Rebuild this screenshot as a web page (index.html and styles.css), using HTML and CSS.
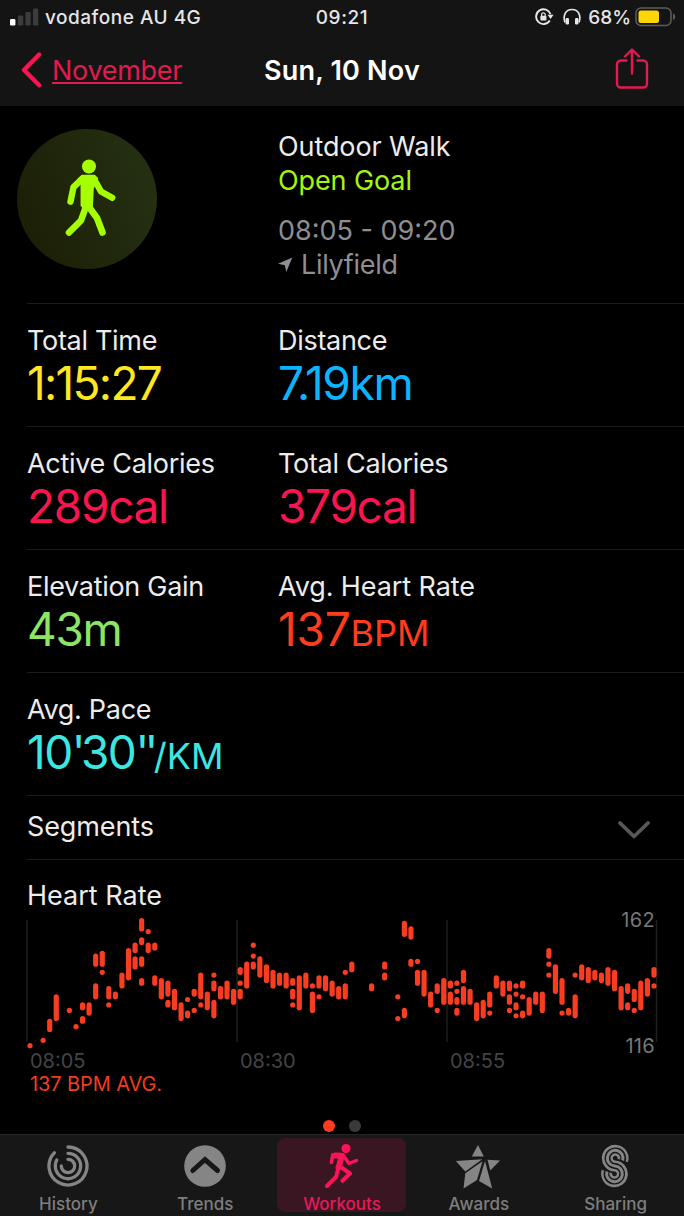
FILE: index.html
```
<!DOCTYPE html>
<html lang="en">
<head>
  <meta charset="UTF-8">
  <meta name="viewport" content="width=device-width, initial-scale=1.0">
  <title>Outdoor Walk - Workouts</title>
  <link rel="stylesheet" href="styles.css">
</head>
<body>

  <header>
    <div class="status-bar">
      <div class="carrier">
        <svg class="signal" width="30" height="18" viewBox="0 0 30 18">
          <rect x="0" y="11" width="5.4" height="6.5" rx="1.2" fill="#fff"/>
          <rect x="8" y="7.5" width="5.2" height="10" rx="1.2" fill="#3c3c3c"/>
          <rect x="15.5" y="4" width="5.2" height="13.5" rx="1.2" fill="#3c3c3c"/>
          <rect x="23" y="0.5" width="5.2" height="17" rx="1.2" fill="#3c3c3c"/>
        </svg>
        <span class="carrier-name">vodafone AU 4G</span>
      </div>
      <span class="clock">09:21</span>
      <div class="indicators">
        <svg class="lock" width="19" height="18" viewBox="0 0 19 18">
          <path d="M15.5 6.2A7.4 7.4 0 1 0 14.8 12.6" fill="none" stroke="#e6e6e6" stroke-width="1.9"/>
          <path d="M12.6 6.8h6l-3 4.2z" fill="#e6e6e6"/>
          <rect x="5.4" y="7.8" width="6" height="4.8" rx="0.6" fill="#e6e6e6"/>
          <path d="M6.6 8V6.6a1.8 1.8 0 0 1 3.6 0V8" fill="none" stroke="#e6e6e6" stroke-width="1.2"/>
        </svg>
        <svg class="headphones" width="18" height="18" viewBox="0 0 18 18">
          <path d="M2 14.5C-0.5 7 3 1.5 9 1.5S18.5 7 16 14.5" fill="none" stroke="#e6e6e6" stroke-width="1.7"/>
          <rect x="2.6" y="10" width="3.4" height="6.5" rx="1.2" fill="#e6e6e6"/>
          <rect x="12" y="10" width="3.4" height="6.5" rx="1.2" fill="#e6e6e6"/>
        </svg>
        <span class="battery-level">68%</span>
        <svg width="41" height="20" viewBox="0 0 41 20">
          <rect x="1" y="1" width="35" height="17.5" rx="5" fill="none" stroke="#5c5c5c" stroke-width="1.5"/>
          <rect x="3.5" y="3.5" width="20.5" height="12.5" rx="2.5" fill="#fdd60a"/>
          <path d="M38 6.5c3 1 3 5.5 0 6.5z" fill="#5c5c5c"/>
        </svg>
      </div>
    </div>
    <nav class="nav-bar">
      <a class="back" href="#">
        <svg width="22" height="36" viewBox="0 0 22 36">
          <path d="M18.2 2.5L3 18l15.2 15.3" fill="none" stroke="#fa1450" stroke-width="4.4" stroke-linecap="round" stroke-linejoin="round"/>
        </svg>
        <span class="back-label">November</span>
      </a>
      <h1>Sun, 10 Nov</h1>
      <svg class="share" width="34" height="42" viewBox="0 0 34 42">
        <path d="M11.5 12.5H6a4 4 0 0 0-4 4v19a4 4 0 0 0 4 4h22a4 4 0 0 0 4-4v-19a4 4 0 0 0-4-4h-5.5M17 25.5V2M10 8.5L17 1.5l7 7" fill="none" stroke="#e11a50" stroke-width="2.4" stroke-linecap="round" stroke-linejoin="round"/>
      </svg>
    </nav>
  </header>

  <main>
    <section class="summary">
      <div class="badge">
        <svg width="46" height="84" viewBox="0 0 46 84" overflow="visible" fill="none" stroke="#a5ff00" stroke-linecap="round" stroke-linejoin="round">
          <circle cx="25" cy="9.5" r="7" fill="#a5ff00" stroke="none"/>
          <path d="M18 18.5h12.5l3 3-4.5 10-0.8 18-4 3.5h-3.2l-3.7-4.5V28l-3-6z" fill="#a5ff00" stroke-width="1.5"/>
          <path d="M18.5 21.7l-9 8.500L6.500 44.700M30 22l7 12.500 11.200 6.300" stroke-width="6.4"/>
          <path d="M22 49.5l-5 14L5 75.5M25 50l8 11 5.5 14.5" stroke-width="6.6"/>
        </svg>
      </div>
      <div class="details">
        <p class="workout">Outdoor Walk</p>
        <p class="goal">Open Goal</p>
        <p class="hours">08:05 - 09:20</p>
        <p class="place">
          <svg width="15" height="16" viewBox="0 0 15 16"><path d="M14.3 0.5L8.3 15 6.8 8.2 0 6.8z" fill="#8e8e93"/></svg>
          <span>Lilyfield</span>
        </p>
      </div>
    </section>

    <section class="stats">
      <div class="stat-row">
        <div class="stat">
          <h2>Total Time</h2>
          <p class="value time">1:15:27</p>
        </div>
        <div class="stat">
          <h2>Distance</h2>
          <p class="value distance">7.19km</p>
        </div>
      </div>
      <div class="stat-row">
        <div class="stat">
          <h2>Active Calories</h2>
          <p class="value calories">289cal</p>
        </div>
        <div class="stat">
          <h2>Total Calories</h2>
          <p class="value calories">379cal</p>
        </div>
      </div>
      <div class="stat-row">
        <div class="stat">
          <h2>Elevation Gain</h2>
          <p class="value elevation">43m</p>
        </div>
        <div class="stat">
          <h2 class="wide">Avg. Heart Rate</h2>
          <p class="value heart">137<span class="unit">BPM</span></p>
        </div>
      </div>
      <div class="stat-row">
        <div class="stat">
          <h2>Avg. Pace</h2>
          <p class="value pace">10<span class="tick">'</span>30<span class="tick">''</span><span class="unit">/KM</span></p>
        </div>
      </div>
    </section>

    <section class="segments">
      <h2>Segments</h2>
      <svg width="34" height="22" viewBox="0 0 34 22">
        <path d="M3 4l14 13.5L31 4" fill="none" stroke="#58585b" stroke-width="3.8" stroke-linecap="round" stroke-linejoin="round"/>
      </svg>
    </section>

    <section class="heart-rate">
      <h2>Heart Rate</h2>
      <div class="chart">
        <svg id="heart-chart" width="632" height="136" viewBox="0 0 632 136"></svg>
        <span class="scale-max">162</span>
        <span class="scale-min">116</span>
      </div>
      <div class="hours-axis">
        <span>08:05</span>
        <span>08:30</span>
        <span>08:55</span>
      </div>
      <p class="average">137 BPM AVG.</p>
      <div class="pager">
        <span class="dot active"></span>
        <span class="dot"></span>
      </div>
    </section>
  </main>

  <footer class="tab-bar">
    <a class="tab" href="#">
      <svg width="44" height="44" viewBox="0 0 44 44" fill="none" stroke="#858585" stroke-width="3.3" stroke-linecap="round">
        <path d="M22 3A19 19 0 1 1 8.3 8.8"/>
        <path d="M22 9.3A12.7 12.7 0 1 1 10.8 16"/>
        <path d="M22 15.3A6.7 6.7 0 1 1 15.3 22"/>
      </svg>
      <span>History</span>
    </a>
    <a class="tab" href="#">
      <svg width="44" height="44" viewBox="0 0 44 44">
        <circle cx="22" cy="22" r="20.8" fill="#858585"/>
        <path d="M9.8 26.5L22 15.5l12.5 11" fill="none" stroke="#171717" stroke-width="5" stroke-linecap="round"/>
      </svg>
      <span>Trends</span>
    </a>
    <a class="tab selected" href="#">
      <svg width="44" height="44" viewBox="0 0 44 44" fill="none" stroke="#fa1458" stroke-linecap="round" stroke-linejoin="round">
        <circle cx="26" cy="4.6" r="4.6" fill="#fa1458" stroke="none"/>
        <path d="M15.5 11.5l6.5 0.500-3.500 11.500" stroke-width="6"/>
        <path d="M21 10.500l-8.300 0.300-1.300 7.700M23 11l6 8.500 7.500-3" stroke-width="3.500"/>
        <path d="M18.500 23.500L16 33l-9 9M20 22.500l10 7-7.500 7.300" stroke-width="4"/>
      </svg>
      <span>Workouts</span>
    </a>
    <a class="tab" href="#">
      <svg width="48" height="44" viewBox="0 0 48 44" overflow="visible" fill="#858585">
        <path d="M23 1l5.800 11.400H16.800z"/>
        <path d="M0.800 17l26.500-1.800L10.300 27.500z"/>
        <path d="M32.500 15.800l12.500 0.700-9.700 10z"/>
        <path d="M27.500 17.300L22 36 8.500 44.500l1.800-15.300z"/>
        <path d="M30 17l7.200 27.500-13.200-7.500z"/>
      </svg>
      <span>Awards</span>
    </a>
    <a class="tab" href="#">
      <svg width="46" height="44" viewBox="0 0 46 44" fill="none">
        <path d="M29.7 16.5A7.85 7.85 0 1 0 21.8 22A7.85 7.85 0 1 1 14 27.5" stroke="#858585" stroke-width="11"/>
        <path d="M29.7 17A7.85 7.85 0 1 0 21.8 22A7.85 7.85 0 1 1 14 27" stroke="#171717" stroke-width="5.8"/>
        <path d="M29.7 16.5A7.85 7.85 0 1 0 21.8 22A7.85 7.85 0 1 1 14 27.5" stroke="#858585" stroke-width="3"/>
      </svg>
      <span>Sharing</span>
    </a>
  </footer>

  <script>
    // [column, high, low, high, low, ...] in beats per minute
    const readings = [
      [0, 116, 116], [2, 118, 118], [3, 125, 122], [4, 134, 126], [6, 129, 129], [7, 123, 123],
      [8, 131, 130, 126, 125], [9, 131, 128], [10, 149, 146, 138, 134], [11, 150, 146, 143, 143],
      [12, 137, 134, 131, 131], [13, 135, 134], [14, 142, 138], [15, 151, 141],
      [16, 153, 151, 148, 145], [17, 162, 159, 155, 154, 148, 146, 140, 139],
      [18, 158, 158, 153, 151], [19, 153, 152, 141, 139], [20, 140, 134], [21, 139, 135, 132, 131],
      [22, 136, 130], [23, 131, 126], [24, 133, 133, 128, 127], [25, 136, 135, 129, 129],
      [26, 142, 134, 131, 131], [27, 135, 130], [28, 142, 142, 139, 137, 132, 127],
      [29, 137, 134], [30, 139, 134], [31, 136, 132], [32, 144, 143, 139, 139, 136, 134],
      [33, 146, 138], [34, 153, 153, 149, 149, 146, 145], [35, 148, 142], [36, 145, 140],
      [37, 143, 138], [38, 142, 139], [39, 142, 138], [40, 140, 139, 136, 134, 131, 131],
      [41, 141, 130], [42, 142, 138], [43, 138, 138, 135, 129], [44, 141, 138, 134, 134],
      [45, 141, 137], [46, 139, 135], [47, 137, 134], [48, 143, 143, 138, 134], [49, 146, 144],
      [52, 138, 137], [54, 146, 145, 142, 141], [56, 134, 134, 126, 126],
      [57, 161, 157, 129, 127], [58, 159, 156, 147, 146], [59, 147, 147, 143, 139],
      [60, 143, 135], [61, 135, 131], [62, 138, 136, 129, 129], [63, 140, 132],
      [64, 139, 138, 135, 132], [65, 139, 139, 136, 136, 133, 132, 129, 128],
      [66, 143, 140, 137, 132], [67, 136, 132], [68, 131, 126], [69, 132, 127],
      [70, 135, 131, 128, 128], [71, 141, 138], [72, 139, 135], [73, 139, 137, 134, 132, 129, 129],
      [74, 138, 138, 135, 135, 131, 130, 127, 127], [75, 139, 138, 134, 134, 128, 127],
      [76, 133, 128], [77, 135, 132], [78, 135, 129], [79, 151, 149, 146, 146, 142, 142],
      [80, 145, 136], [81, 140, 132, 128, 128], [82, 129, 128], [83, 142, 142, 134, 127],
      [84, 145, 141], [85, 144, 140], [86, 143, 141], [87, 142, 140], [88, 144, 139],
      [89, 143, 137], [90, 137, 130], [91, 138, 136, 131, 130], [92, 136, 133, 129, 129],
      [93, 139, 130], [94, 140, 135], [95, 144, 142, 138, 138]
    ];

    function addLine(className, x, y1, y2) {
      const line = document.createElementNS('http://www.w3.org/2000/svg', 'line');
      line.setAttribute('class', className);
      line.setAttribute('x1', x);
      line.setAttribute('x2', x);
      line.setAttribute('y1', y1);
      line.setAttribute('y2', y2);
      document.getElementById('heart-chart').appendChild(line);
    }

    function drawChart() {
      const toY = bpm => 131.7 - (bpm - 116) * 2.717;

      [1, 211, 421, 630.5].forEach(x => addLine('grid-line', x, 6, 128));

      readings.forEach(([column, ...ranges]) => {
        const x = 4 + column * 6.568;
        for (let i = 0; i < ranges.length; i += 2) {
          // zero length lines do not always get their round caps
          addLine('beat', x, toY(ranges[i]), toY(ranges[i + 1]) + 0.01);
        }
      });
    }

    drawChart();
  </script>
</body>
</html>
```

FILE: styles.css
```
* {
  box-sizing: border-box;
}

body {
  font-family: Inter, "Liberation Sans", sans-serif;
  background-color: #000;
  color: #ececec;
  margin: 0;
  height: 1216px;
  display: flex;
  flex-direction: column;
  overflow: hidden;
}

h1, h2, p {
  margin: 0;
  font-weight: 400;
}

a {
  color: inherit;
  text-decoration: none;
}

svg {
  display: block;
  flex-shrink: 0;
}

header {
  background-color: #141414;
  height: 106px;
}

main {
  flex: 1;
}

.status-bar {
  display: grid;
  grid-template-columns: 1fr auto 1fr;
  align-items: center;
  height: 34px;
  padding: 0 8px;
  font-size: 19px;
  font-weight: 500;
  color: #e6e6e6;
}

.carrier, .indicators {
  display: flex;
  align-items: center;
}

.carrier {
  gap: 5px;
  padding-left: 2px;
}

.carrier-name {
  letter-spacing: 0.5px;
}

.clock {
  letter-spacing: 0.6px;
}

.indicators {
  justify-content: flex-end;
}

.lock {
  margin-right: 9px;
}

.headphones {
  margin-right: 7px;
}

.battery-level {
  margin-right: 4px;
}

.nav-bar {
  display: grid;
  grid-template-columns: 1fr auto 1fr;
  align-items: center;
  height: 72px;
  padding: 0 21px;
}

.back {
  display: flex;
  align-items: center;
  gap: 9px;
  color: #e11a50;
  font-size: 27px;
  letter-spacing: -0.3px;
}

.back-label {
  text-decoration: underline;
  text-decoration-thickness: 1.5px;
  text-underline-offset: 2px;
}

.nav-bar h1 {
  font-size: 27px;
  font-weight: 600;
  letter-spacing: 0.2px;
  color: #fff;
}

.share {
  justify-self: end;
  margin: 0 14px 2px 0;
}

.summary {
  display: flex;
  height: 198px;
  padding: 23px 0 0 17px;
}

.badge {
  width: 140px;
  height: 140px;
  margin-right: 121px;
  border-radius: 50%;
  background: linear-gradient(70deg, #1a1d04, #263214);
  display: flex;
  align-items: center;
  justify-content: center;
}

.details {
  padding-top: 1px;
}

.details p {
  font-size: 27px;
  line-height: 34px;
  letter-spacing: -0.1px;
}

.details .goal {
  color: #a5f50f;
}

.details .hours {
  margin-top: 16px;
  letter-spacing: 0;
  color: #8e8e93;
}

.details .place {
  display: flex;
  align-items: center;
  gap: 8px;
  letter-spacing: -0.3px;
  color: #8e8e93;
}

.stats, .segments, .heart-rate {
  margin-left: 27px;
}

.stat-row {
  display: grid;
  grid-template-columns: 251px 1fr;
  height: 123px;
  padding-top: 22px;
  border-bottom: 1px solid #1c1c1c;
}

.stat-row:first-child {
  border-top: 1px solid #1c1c1c;
  height: 124px;
  margin-top: -1px;
}

h2 {
  font-size: 27px;
  line-height: 30px;
}

.stat h2 {
  letter-spacing: -0.3px;
}

.stat h2.wide {
  letter-spacing: -0.1px;
}

.value {
  font-size: 46px;
  line-height: 54px;
  letter-spacing: -1.3px;
}

.unit {
  font-size: 36px;
  letter-spacing: 0;
}

.time {
  color: #ffe620;
  letter-spacing: -1.7px;
}

.distance {
  color: #0ab4ff;
}

.calories {
  color: #fa1450;
}

.elevation {
  color: #8ce664;
}

.heart {
  color: #ff3c1e;
  letter-spacing: -0.2px;
}

.pace {
  color: #3ce6e1;
  letter-spacing: -1.5px;
}

.tick {
  letter-spacing: -4.6px;
}

.segments {
  display: flex;
  align-items: center;
  justify-content: space-between;
  height: 64px;
  padding-right: 33px;
  border-bottom: 1px solid #1c1c1c;
}

.segments h2 {
  letter-spacing: -0.1px;
  margin-bottom: 2px;
}

.segments svg {
  margin-top: 4px;
}

.heart-rate {
  padding-top: 21px;
}

.chart {
  position: relative;
  width: 632px;
  height: 136px;
  margin: 3px 0 0 -1px;
}

.grid-line {
  stroke: #1e1e1e;
  stroke-width: 1.5;
}

.beat {
  stroke: #fa3c20;
  stroke-width: 5.2;
  stroke-linecap: round;
}

/* scale labels lie over the chart */
.scale-max, .scale-min {
  position: absolute;
  right: 3px;
  font-size: 20px;
  line-height: 24px;
  letter-spacing: 0.3px;
  color: #77777a;
}

.scale-max {
  top: -6px;
}

.scale-min {
  bottom: -8px;
}

.hours-axis {
  display: grid;
  grid-template-columns: 210px 210px 1fr;
  margin-top: -1px;
  padding-left: 3px;
  font-size: 20px;
  line-height: 24px;
  color: #444446;
}

.average {
  padding-left: 3px;
  font-size: 20px;
  line-height: 23px;
  letter-spacing: -0.1px;
  color: #f03c20;
}

.pager {
  display: flex;
  gap: 14px;
  margin: 24px 0 0 296px;
}

.dot {
  width: 12px;
  height: 12px;
  border-radius: 50%;
  background-color: #3a3a3c;
}

.dot.active {
  background-color: #ff3c1e;
}

.tab-bar {
  display: grid;
  grid-template-columns: repeat(5, 1fr);
  height: 82px;
  padding-top: 3px;
  background-color: #171717;
  border-top: 1px solid #262626;
}

.tab {
  display: flex;
  flex-direction: column;
  align-items: center;
  width: 129px;
  height: 74px;
  margin: 0 auto;
  padding-top: 6px;
  border-radius: 8px;
  font-size: 17px;
  font-weight: 500;
  line-height: 22px;
  color: #7e7e7e;
}

.tab span {
  margin-top: 5px;
}

.tab.selected {
  background-color: #3a1622;
  color: #e6195a;
}
```
